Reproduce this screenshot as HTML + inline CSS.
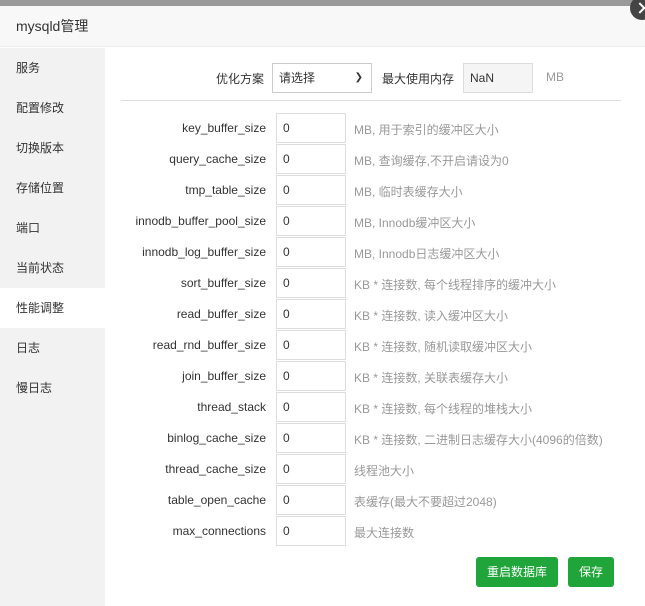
<!DOCTYPE html>
<html><head><meta charset="utf-8"><style>
*{margin:0;padding:0;box-sizing:border-box}
body{width:645px;height:606px;overflow:hidden;background:#fff;font-family:"Liberation Sans","Noto Sans CJK SC",sans-serif;font-size:12px;color:#555;position:relative}
.top{position:absolute;left:0;top:0;width:645px;height:6px;background:#9a9a9a}
.hdr{position:absolute;left:0;top:6px;width:645px;height:41px;background:#f8f8f8;border-bottom:1px solid #eee;font-size:14px;color:#333;line-height:41px;padding-left:16px}
.close{position:absolute;left:630px;top:-4px;width:24px;height:24px;border-radius:50%;background:#444}
.close:after{content:"";position:absolute;left:6px;top:8px;width:6px;height:6px;border-right:2px solid #fff;border-top:2px solid #fff;transform:rotate(45deg)}
.side{position:absolute;left:0;top:48px;width:105px;height:558px;background:#f2f2f2}
.side div{height:40px;line-height:40px;padding-left:16px;color:#333;font-size:12px}
.side .on{background:#fff}
.l{position:absolute;text-align:right;color:#333}
.in{position:absolute;border:1px solid #ddd;height:30px;line-height:28px;padding-left:6px;color:#333;background:#fff}
.d{position:absolute;color:#999}
.btn{position:absolute;background:#20a53a;color:#fff;border-radius:3px;height:30px;line-height:30px;text-align:center;font-size:12px}
</style></head><body>
<div class="top"></div>
<div class="hdr">mysqld管理</div>
<div class="close"></div>
<div class="side">
<div>服务</div><div>配置修改</div><div>切换版本</div><div>存储位置</div><div>端口</div><div>当前状态</div><div class="on">性能调整</div><div>日志</div><div>慢日志</div>
</div>
<div class="l" style="left:150px;top:70px;width:114px">优化方案</div>
<div class="in" style="left:272px;top:63px;width:100px;border-color:#ccc">请选择<span style="position:absolute;right:8px;top:0;font-size:10px">&#10095;</span></div>
<div class="l" style="left:370px;top:70px;width:84px">最大使用内存</div>
<div class="in" style="left:463px;top:63px;width:70px;background:#f5f5f5">NaN</div>
<div class="d" style="left:546px;top:70px">MB</div>
<div style="position:absolute;left:121px;top:100px;width:500px;height:1px;background:#ddd"></div>
<div id="rows"></div>
<div class="btn" style="left:476px;top:557px;width:82px">重启数据库</div>
<div class="btn" style="left:568px;top:557px;width:46px">保存</div>
<script>
var r=[["key_buffer_size","MB, 用于索引的缓冲区大小"],["query_cache_size","MB, 查询缓存,不开启请设为0"],["tmp_table_size","MB, 临时表缓存大小"],["innodb_buffer_pool_size","MB, Innodb缓冲区大小"],["innodb_log_buffer_size","MB, Innodb日志缓冲区大小"],["sort_buffer_size","KB * 连接数, 每个线程排序的缓冲大小"],["read_buffer_size","KB * 连接数, 读入缓冲区大小"],["read_rnd_buffer_size","KB * 连接数, 随机读取缓冲区大小"],["join_buffer_size","KB * 连接数, 关联表缓存大小"],["thread_stack","KB * 连接数, 每个线程的堆栈大小"],["binlog_cache_size","KB * 连接数, 二进制日志缓存大小(4096的倍数)"],["thread_cache_size","线程池大小"],["table_open_cache","表缓存(最大不要超过2048)"],["max_connections","最大连接数"]];
var h="";r.forEach(function(x,i){var y=113+i*31;h+='<div class="l" style="left:100px;top:'+(y+8)+'px;width:166px">'+x[0]+'</div><div class="in" style="left:276px;top:'+y+'px;width:70px">0</div><div class="d" style="left:354px;top:'+(y+8)+'px">'+x[1]+'</div>';});
document.getElementById("rows").innerHTML=h;
</script>
</body></html>
